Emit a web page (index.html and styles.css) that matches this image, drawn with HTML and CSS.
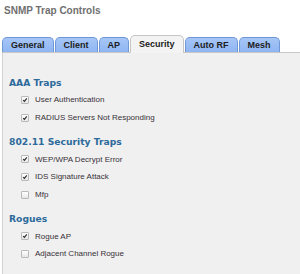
FILE: index.html
```html
<!DOCTYPE html>
<html lang="en">
<head>
    <meta charset="UTF-8">
    <title>SNMP Trap Controls</title>
    <link rel="stylesheet" href="styles.css">
</head>
<body>
    <h1 class="page-title">SNMP Trap Controls</h1>

    <div class="tabs">
        <div class="tab">General</div>
        <div class="tab">Client</div>
        <div class="tab">AP</div>
        <div class="tab active">Security</div>
        <div class="tab">Auto RF</div>
        <div class="tab">Mesh</div>
    </div>

    <div class="panel">
        <h2 class="group-title first">AAA Traps</h2>
        <label class="check-row"><span class="box checked"><svg viewBox="0 0 8 8"><path d="M1.6 4.2 L3.2 5.9 L6.4 1.9"/></svg></span>User Authentication</label>
        <label class="check-row"><span class="box checked"><svg viewBox="0 0 8 8"><path d="M1.6 4.2 L3.2 5.9 L6.4 1.9"/></svg></span>RADIUS Servers Not Responding</label>

        <h2 class="group-title">802.11 Security Traps</h2>
        <label class="check-row"><span class="box checked"><svg viewBox="0 0 8 8"><path d="M1.6 4.2 L3.2 5.9 L6.4 1.9"/></svg></span>WEP/WPA Decrypt Error</label>
        <label class="check-row"><span class="box checked"><svg viewBox="0 0 8 8"><path d="M1.6 4.2 L3.2 5.9 L6.4 1.9"/></svg></span>IDS Signature Attack</label>
        <label class="check-row"><span class="box"></span>Mfp</label>

        <h2 class="group-title">Rogues</h2>
        <label class="check-row"><span class="box checked"><svg viewBox="0 0 8 8"><path d="M1.6 4.2 L3.2 5.9 L6.4 1.9"/></svg></span>Rogue AP</label>
        <label class="check-row"><span class="box"></span>Adjacent Channel Rogue</label>
    </div>
</body>
</html>
```

FILE: styles.css
```css
* {
    margin: 0;
    padding: 0;
    box-sizing: border-box;
}

body {
    font-family: 'Liberation Sans', Arial, sans-serif;
    background: #ffffff;
    color: #333333;
    height: 274px;
    overflow: hidden;
    display: flex;
    flex-direction: column;
}

/* Page title */
.page-title {
    font-size: 10px;
    font-weight: 700;
    color: #707070;
    line-height: 12px;
    padding: 5px 0 0 4px;
}

/* Tab strip */
.tabs {
    display: flex;
    align-items: flex-end;
    gap: 1px;
    padding-left: 2px;
    margin-top: 17px;
    height: 18px;
}

.tab {
    height: 15px;
    padding: 0 8px;
    background: linear-gradient(#a6c6f7, #8fb5f2);
    border: 1px solid #6f97d6;
    border-bottom: none;
    border-radius: 5px 5px 0 0;
    font-size: 9px;
    font-weight: 700;
    line-height: 14px;
    color: #1c1c1c;
}

.tab.active {
    height: 18px;
    margin-bottom: -1px;
    background: #f3f3f3;
    border-color: #c6c6c6;
    line-height: 17px;
    position: relative;
    z-index: 2;
}

/* Content panel */
.panel {
    flex: 1;
    margin-left: 2px;
    background: #f0f0f0;
    border-top: 1px solid #c8c8c8;
    border-left: 1px solid #d2d2d2;
    padding-top: 23px;
}

.group-title {
    font-family: 'DejaVu Sans', Verdana, sans-serif;
    font-size: 9.2px;
    font-weight: 700;
    color: #2d6a9b;
    line-height: 13px;
    padding-left: 6px;
    margin: 9px 0 2px;
}

.group-title.first {
    margin-top: 0;
}

.check-row {
    display: flex;
    align-items: center;
    gap: 6px;
    height: 17.7px;
    padding-left: 18px;
    font-size: 8px;
    color: #383038;
}

.box {
    width: 8px;
    height: 8px;
    border: 1px solid #b9b9b9;
    border-radius: 1px;
    background: linear-gradient(#ffffff, #e6e6e6);
    display: flex;
}

.box svg {
    width: 100%;
    height: 100%;
    fill: none;
    stroke: #2a2a2a;
    stroke-width: 1.5;
}
```
